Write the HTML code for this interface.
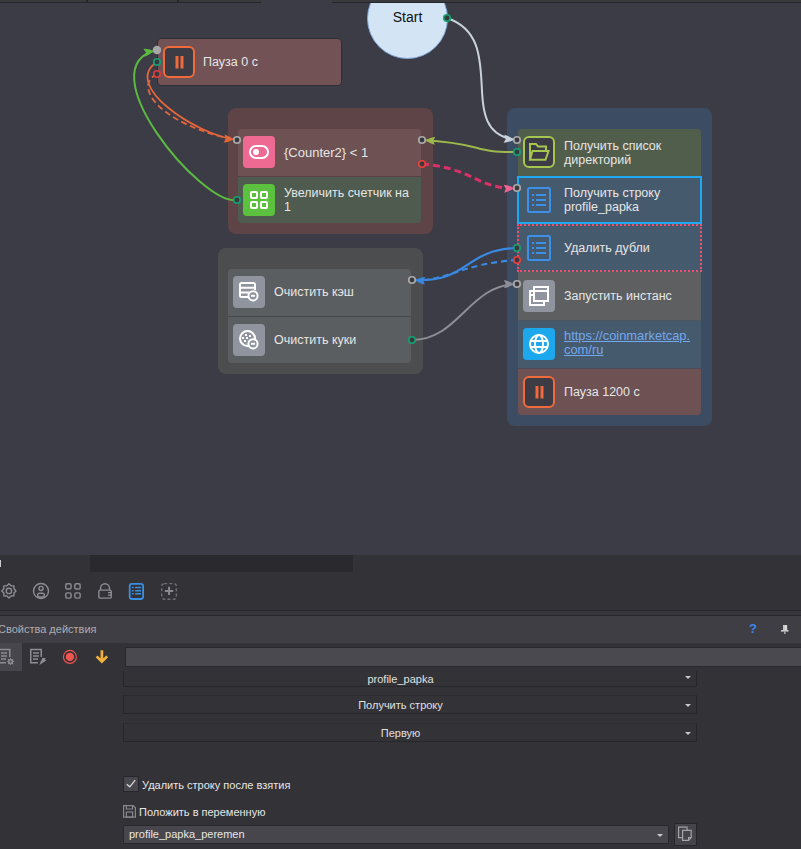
<!DOCTYPE html>
<html><head><meta charset="utf-8">
<style>
*{box-sizing:border-box;margin:0;padding:0}
html,body{width:801px;height:849px;overflow:hidden;background:#333237;font-family:"Liberation Sans",sans-serif}
.abs{position:absolute}
#canvas{position:absolute;left:0;top:0;width:801px;height:555px;background:#3c3c46;overflow:hidden}
.tab{position:absolute;top:0;height:3px;background:#3a393e;border-bottom:1px solid #27262b}
.tabsep{position:absolute;top:0;height:3px;width:2px;background:#252429}
.group{position:absolute;border-radius:8px}
.node{position:absolute;width:183px;color:#e6e6e6;font-size:12.5px;line-height:14px}
.node .txt{position:absolute;left:46px;top:0;height:100%;display:flex;align-items:center;white-space:pre}
.icon{position:absolute;left:5px;width:32px;height:32px;border-radius:4px}
.icon svg{position:absolute;left:0;top:0}
#wires{position:absolute;left:0;top:0}
.panel{position:absolute;left:0;top:555px;width:801px;height:294px;background:#333237}
.combo{position:absolute;left:123px;width:574px;height:19px;border:1px solid #27262b;border-top-color:#2c2b30;background:#333237;color:#e0e0e0;font-size:11px;text-align:center}
.combo span{position:absolute;left:0;right:19px;top:0;bottom:0;display:flex;align-items:center;justify-content:center}
.combo i{position:absolute;left:561px;top:8px;width:0;height:0;border-left:3px solid transparent;border-right:3px solid transparent;border-top:3px solid #c8c8c8}
</style></head><body>
<div id="canvas">

  <!-- Start circle -->
  <div class="abs" style="left:367px;top:-22px;width:81px;height:81px;border-radius:50%;background:#d3e5f5;border:1px solid #7fa8d8"></div>
  <div class="abs" style="left:367px;top:9px;width:81px;text-align:center;font-size:14px;line-height:16px;color:#111">Start</div>

  <!-- Pause 0 node -->
  <div class="node" style="left:157px;top:38px;width:185px;height:48px;background:#725255;border-radius:4px;border:1px solid #2e2d35">
    <div class="icon" style="left:5px;top:7px;background:#3d3b44;border:2px solid #f06a3c;border-radius:6px">
      <svg width="28" height="28"><rect x="10.5" y="8" width="3" height="12.5" fill="#f06a3c"/><rect x="15.5" y="8" width="3" height="12.5" fill="#f06a3c"/></svg>
    </div>
    <div class="txt" style="left:45px">Пауза 0 с</div>
  </div>

  <!-- red group -->
  <div class="group" style="left:228px;top:108px;width:205px;height:126px;background:#5e4347"></div>
  <div class="node" style="left:238px;top:129px;height:47px;background:#6d5153;border-radius:4px 4px 0 0">
    <div class="icon" style="top:7px;background:#ee6a92">
      <svg width="32" height="32"><rect x="7" y="10" width="18" height="12" rx="6" fill="none" stroke="#fff" stroke-width="2"/><circle cx="13" cy="16" r="3" fill="#fff"/></svg>
    </div>
    <div class="txt" style="font-size:13px">{Counter2} &lt; 1</div>
  </div>
  <div class="node" style="left:238px;top:177px;height:46px;background:#4e5b4e;border-radius:0 0 4px 4px">
    <div class="icon" style="top:7px;background:#5cc13e">
      <svg width="32" height="32" fill="none" stroke="#fff" stroke-width="2"><rect x="8" y="8" width="6" height="6" rx="1"/><rect x="18" y="8" width="6" height="6" rx="1"/><rect x="8" y="18" width="6" height="6" rx="1"/><rect x="18" y="18" width="6" height="6" rx="1"/></svg>
    </div>
    <div class="txt">Увеличить счетчик на
1</div>
  </div>

  <!-- gray group -->
  <div class="group" style="left:218px;top:248px;width:205px;height:126px;background:#4b4d4f"></div>
  <div class="node" style="left:228px;top:269px;height:47px;background:#5b5e61;border-radius:4px 4px 0 0">
    <div class="icon" style="top:7px;background:#8f949e"><svg width="32" height="32" fill="none" stroke="#fff" stroke-width="2"><path d="M15,21 H8.5 Q7,21 7,19.5 V8.5 Q7,7 8.5,7 H20.5 Q22,7 22,8.5 V14"/><path d="M7,11.8 H22 M7,16.5 H16"/><circle cx="20" cy="19.8" r="4.6" fill="#8f949e"/><path d="M18,19.8 H22"/></svg></div>
    <div class="txt" style="top:-1px">Очистить кэш</div>
  </div>
  <div class="node" style="left:228px;top:317px;height:46px;background:#5b5e61;border-radius:0 0 4px 4px">
    <div class="icon" style="top:7px;background:#8f949e"><svg width="32" height="32" fill="none" stroke="#fff" stroke-width="2"><circle cx="14.5" cy="14.5" r="7.5"/><circle cx="20" cy="19.8" r="4.6" fill="#8f949e"/><path d="M18,19.8 H22"/><g fill="#fff" stroke="none"><rect x="12" y="10" width="2" height="2"/><rect x="16" y="11" width="2" height="2"/><rect x="9" y="13" width="2" height="2"/><rect x="13" y="13" width="2" height="2"/><rect x="11" y="16" width="2" height="2"/></g></svg></div>
    <div class="txt">Очистить куки</div>
  </div>

  <!-- blue group -->
  <div class="group" style="left:507px;top:108px;width:205px;height:318px;background:#3c4c62"></div>
  <div class="node" style="left:518px;top:129px;height:47px;background:#525e4c;border-radius:4px 4px 0 0">
    <div class="icon" style="top:7px;background:#3c3b46;border:2px solid #a5c74f;border-radius:6px"><svg width="28" height="28" fill="none" stroke="#a5c74f" stroke-width="2" style="left:0;top:0"><path d="M5,21.75 V6 H11 L13,8.5 H21 V12.5" stroke-linejoin="miter"/><path d="M7.5,13 H23.5 L20.5,21.75 H5 Z" stroke-linejoin="miter"/></svg></div>
    <div class="txt">Получить список
директорий</div>
  </div>
  <div class="node" style="left:517px;top:176px;width:185px;height:48px;background:#465a6e;border:2px solid #1fa9f1">
    <div class="icon" style="left:4px;top:6px;background:transparent"><svg width="32" height="32" fill="none" stroke="#3d90ea" stroke-width="2"><rect x="5" y="4" width="22" height="24" rx="1.5"/><path d="M9,11 h2 M9,16 h2 M9,21 h2 M13,11 h10 M13,16 h10 M13,21 h10"/></svg></div><div class="txt" style="left:45px">Получить строку
profile_papka</div>
  </div>
  <div class="node" style="left:517px;top:224px;width:185px;height:48px;background:#465a6e;border:2px dotted #f0506a">
    <div class="icon" style="left:4px;top:6px;background:transparent"><svg width="32" height="32" fill="none" stroke="#3d90ea" stroke-width="2"><rect x="5" y="4" width="22" height="24" rx="1.5"/><path d="M9,11 h2 M9,16 h2 M9,21 h2 M13,11 h10 M13,16 h10 M13,21 h10"/></svg></div><div class="txt" style="left:45px">Удалить дубли</div>
  </div>
  <div class="node" style="left:518px;top:272px;height:48px;background:#5d5f61">
    <div class="icon" style="top:8px;background:#8f949e"><svg width="32" height="32" fill="none" stroke="#fff" stroke-width="2" stroke-linejoin="miter"><path d="M11,11 H7 V25 H21 V21"/><path d="M7,15 H10"/><rect x="11" y="7" width="14" height="14"/><path d="M11,11 H25"/></svg></div>
    <div class="txt">Запустить инстанс</div>
  </div>
  <div class="node" style="left:518px;top:320px;height:48px;background:#465a6e">
    <div class="icon" style="top:8px;background:#1da8ee"><svg width="32" height="32" fill="none" stroke="#fff" stroke-width="2"><circle cx="16" cy="16" r="9"/><ellipse cx="16" cy="16" rx="4" ry="9"/><path d="M8,13 H24 M8,19 H24"/></svg></div>
    <div class="txt" style="color:#74a9ee;text-decoration:underline;font-size:12.9px;top:-1px">https://coinmarketcap.
com/ru</div>
  </div>
  <div class="node" style="left:518px;top:368px;height:47px;background:#6d5153;border-radius:0 0 4px 4px">
    <div class="icon" style="top:8px;background:#3d3b44;border:2px solid #f06a3c;border-radius:6px"><svg width="28" height="28"><rect x="10.5" y="8" width="3" height="12.5" fill="#f06a3c"/><rect x="15.5" y="8" width="3" height="12.5" fill="#f06a3c"/></svg></div>
    <div class="txt">Пауза 1200 с</div>
  </div>


  <div class="abs" style="left:238px;top:176px;width:183px;height:1px;background:#5a3f45"></div>
  <div class="abs" style="left:228px;top:316px;width:183px;height:1px;background:#474a4d"></div>
  <div class="abs" style="left:518px;top:320px;width:183px;height:1px;background:#4a5663"></div>
  <div class="abs" style="left:518px;top:368px;width:183px;height:1px;background:#4d4a59"></div>
  <svg id="wires" width="801" height="555">
<path d="M447,18 C511.3,39.5 451.8,133.8 517,140" fill="none" stroke="#c9d2dc" stroke-width="2"/>
<path d="M517,152 C470.1,153 486.9,143.7 422,140" fill="none" stroke="#9cb84c" stroke-width="2"/>
<path d="M422,164 C474.3,168.1 478.6,190.2 517,188" fill="none" stroke="#dc3068" stroke-width="3" stroke-dasharray="7 4"/>
<path d="M517,248 C463,249.7 469.8,283.2 412,280" fill="none" stroke="#3a88e2" stroke-width="2.2"/>
<path d="M517,260 C460.1,263.7 447.2,281.9 412,280" fill="none" stroke="#3a88e2" stroke-width="2.2" stroke-dasharray="6 4"/>
<path d="M412,340 C459.3,339.7 468.8,284.5 517,284" fill="none" stroke="#8e8e96" stroke-width="2"/>
<path d="M157,62 C121,84.9 196.2,135.2 237,140" fill="none" stroke="#e4663c" stroke-width="1.8"/>
<path d="M157,74 C132,86 160.2,125.4 237,140" fill="none" stroke="#e4663c" stroke-width="1.8" stroke-dasharray="6 3.5"/>
<path d="M237,200 C202.3,206.6 85.2,65.8 157,50" fill="none" stroke="#5cba40" stroke-width="2"/>
<path d="M513.22,139.64 Q508.93,142.45 503.57,142.84 L505.85,138.94 L504.35,134.68 Q509.54,136.08 513.22,139.64 Z" fill="#c9d2dc"/>
<path d="M425.79,140.22 Q429.97,137.25 435.31,136.65 L433.18,140.64 L434.85,144.84 Q429.61,143.64 425.79,140.22 Z" fill="#9cb84c"/>
<path d="M513.21,188.22 Q509.40,191.64 504.16,192.84 L505.82,188.64 L503.69,184.66 Q509.03,185.25 513.21,188.22 Z" fill="#ee6494"/>
<path d="M415.79,280.21 Q419.96,277.24 425.31,276.63 L423.18,280.62 L424.85,284.82 Q419.61,283.63 415.79,280.21 Z" fill="#3a88e2"/>
<path d="M513.20,284.04 Q509.23,287.28 503.94,288.24 L505.80,284.12 L503.86,280.04 Q509.17,280.88 513.20,284.04 Z" fill="#8e8e96"/>
<path d="M233.23,139.56 Q228.88,142.27 223.51,142.54 L225.88,138.69 L224.47,134.40 Q229.63,135.91 233.23,139.56 Z" fill="#e4663c"/>
<path d="M153.29,50.82 Q150.07,54.80 145.09,56.82 L146.06,52.41 L143.32,48.81 Q148.69,48.55 153.29,50.82 Z" fill="#5cba40"/>
<circle cx="447" cy="18" r="3.25" fill="#3a3940" stroke="#14a36b" stroke-width="1.7"/>
<circle cx="157" cy="50" r="4.2" fill="#a8a8a8"/>
<circle cx="157" cy="62" r="3.25" fill="#3a3940" stroke="#14a070" stroke-width="1.7"/>
<circle cx="157" cy="74" r="3.25" fill="#3a3940" stroke="#e03c3c" stroke-width="1.7"/>
<circle cx="237" cy="140" r="3.25" fill="#3a3940" stroke="#aaa9a8" stroke-width="1.7"/>
<circle cx="422" cy="140" r="3.25" fill="#3a3940" stroke="#aaa9a8" stroke-width="1.7"/>
<circle cx="422" cy="164" r="3.25" fill="#3a3940" stroke="#e8403c" stroke-width="1.7"/>
<circle cx="237" cy="200" r="3.25" fill="#3a3940" stroke="#14a070" stroke-width="1.7"/>
<circle cx="412" cy="280" r="3.25" fill="#3a3940" stroke="#aaa9a8" stroke-width="1.7"/>
<circle cx="412" cy="340" r="3.25" fill="#3a3940" stroke="#14a070" stroke-width="1.7"/>
<circle cx="517" cy="140" r="3.25" fill="#3a3940" stroke="#aaa9a8" stroke-width="1.7"/>
<circle cx="517" cy="152" r="3.25" fill="#3a3940" stroke="#14a070" stroke-width="1.7"/>
<circle cx="517" cy="188" r="3.25" fill="#3a3940" stroke="#aaa9a8" stroke-width="1.7"/>
<circle cx="517" cy="248" r="3.25" fill="#3a3940" stroke="#14a070" stroke-width="1.7"/>
<circle cx="517" cy="260" r="3.25" fill="#3a3940" stroke="#e8403c" stroke-width="1.7"/>
<circle cx="517" cy="284" r="3.25" fill="#3a3940" stroke="#aaa9a8" stroke-width="1.7"/>
</svg>
  <div class="tab" style="left:0;width:87px"></div>
  <div class="tab" style="left:88px;width:90px"></div>
  <div class="tab" style="left:179px;width:82px"></div>
  <div class="tab" style="left:332px;width:469px"></div>
  <div class="tabsep" style="left:86px"></div>
  <div class="tabsep" style="left:177px"></div>
</div>

<div class="panel">
  <div class="abs" style="left:90px;top:0;width:263px;height:17px;background:#2a292e"></div>
  <div class="abs" style="left:0;top:5px;width:1px;height:7px;background:#cccccc"></div>
  <!-- toolbar icons -->
  <svg class="abs" style="left:0;top:20px" width="190" height="36" fill="none" stroke="#8d8c93" stroke-width="1.4">
    <path d="M8.90,8.80 L11.00,10.82 L13.92,10.88 L13.98,13.80 L16.00,15.90 L13.98,18.00 L13.92,20.92 L11.00,20.98 L8.90,23.00 L6.80,20.98 L3.88,20.92 L3.82,18.00 L1.80,15.90 L3.82,13.80 L3.88,10.88 L6.80,10.82 Z" stroke-linejoin="round"/>
    <circle cx="8.9" cy="15.9" r="2.7"/>
    <circle cx="41" cy="16" r="7.5"/>
    <circle cx="41" cy="13.4" r="2.05"/>
    <rect x="37.7" y="18.3" width="6.6" height="3.7" rx="1.8"/>
    <rect x="65.75" y="8.75" width="5.3" height="5.3" rx="1.4"/><rect x="74.85" y="8.75" width="5.3" height="5.3" rx="1.4"/>
    <rect x="65.75" y="17.85" width="5.3" height="5.3" rx="1.4"/><rect x="74.85" y="17.85" width="5.3" height="5.3" rx="1.4"/>
    <path d="M100.55,15 V13.2 A4.45,4.45 0 0 1 109.45,13.2 V15"/>
    <rect x="98.85" y="15.15" width="12.4" height="8" rx="1.5"/>
    <path d="M108,17.6 H111.5 M108,20.2 H111.5" stroke-width="1.2"/>
    <rect x="129.7" y="8.8" width="13.4" height="15.2" rx="2.2" stroke="#3b8fe0" stroke-width="1.8"/>
    <path d="M132,12.6 h1.7 M132,15.7 h1.7 M132,18.8 h1.7 M135.1,12.6 h5.9 M135.1,15.7 h5.9 M135.1,18.8 h5.9" stroke="#3b8fe0" stroke-width="1.5"/>
    <rect x="161.75" y="8.65" width="14.6" height="15.6" rx="2.5" stroke-dasharray="3 2.2" stroke="#6f6e74" stroke-width="1.4"/>
    <path d="M169.06,11.7 v8.4 M164.9,15.9 h8.35" stroke="#8a898f" stroke-width="2"/>
  </svg>
  <div class="abs" style="left:0;top:55px;width:801px;height:1px;background:#27262b"></div>
  <div class="abs" style="left:0;top:56px;width:801px;height:4px;background:#37363c"></div>
  <div class="abs" style="left:0;top:60px;width:801px;height:1px;background:#27262b"></div>
  <div class="abs" style="left:0;top:61px;width:801px;height:27px;background:#3f3e44"></div>
  <div class="abs" style="left:-2px;top:68px;font-size:11px;line-height:13px;color:#aeadb3;white-space:pre">Свойства действия</div>
  <div class="abs" style="left:749px;top:66px;font-size:13px;line-height:16px;color:#3d86e8;font-weight:bold">?</div>
  <svg class="abs" style="left:778px;top:69px" width="14" height="12" fill="#c8c8c8"><rect x="5" y="1" width="4.2" height="5.5"/><rect x="7.2" y="1.5" width="1.2" height="4.5" fill="#e0e0e0"/><rect x="3" y="6" width="7.5" height="1.6"/><rect x="6.3" y="7.5" width="1.2" height="2.5"/></svg>
  <!-- action row -->
  <div class="abs" style="left:0;top:88px;width:22px;height:28px;background:#47464c"></div>
  <svg class="abs" style="left:0;top:88px" width="120" height="28" fill="none" stroke="#8d8c93" stroke-width="1.5">
    <path d="M-2,6.5 H9.75 V14"/><path d="M-2,19.75 H6"/><path d="M1,10 h6 M1,13 h6 M1,16 h5" stroke-width="1.6"/>
    <path d="M10.60,15.00 L11.59,16.20 L13.15,16.05 L13.00,17.61 L14.20,18.60 L13.00,19.59 L13.15,21.15 L11.59,21.00 L10.60,22.20 L9.61,21.00 L8.05,21.15 L8.20,19.59 L7.00,18.60 L8.20,17.61 L8.05,16.05 L9.61,16.20 Z" fill="#8d8c93" stroke="none"/><circle cx="10.6" cy="18.6" r="1.1" fill="#47464c" stroke="none"/>
    <path d="M41.25,14 V6.5 H30.75 V19.75 H38"/><path d="M33,10 h6 M33,13 h6 M33,16 h5" stroke-width="1.6"/>
    <path d="M42.2,15 H45.8 L44.8,16.7 L46.6,17.3 L39.4,21.9 L40.8,18.2 L41.4,17.5 Z" fill="#8d8c93" stroke="none"/>
    <circle cx="69.9" cy="13.9" r="6.5" stroke="#ee5550" stroke-width="1.1"/>
    <circle cx="69.9" cy="13.9" r="4.2" fill="#f05550" stroke="none"/>
    <path d="M101.9,7.2 V18.5 M96.6,13.4 L101.9,18.7 L107.2,13.4" stroke="#f2b23a" stroke-width="2.7"/>
  </svg>
  <div class="abs" style="left:125px;top:92px;width:690px;height:20px;background:#4a494f;border:1px solid #29282d"></div>
  
  <div class="combo" style="top:116px;height:16px;border-top:none"><span>profile_papka</span><i style="top:5px"></i></div>
  <div class="combo" style="top:140px"><span>Получить строку</span><i></i></div>
  <div class="combo" style="top:168px"><span>Первую</span><i></i></div>
  <div class="abs" style="left:123px;top:221px;width:16px;height:16px;background:#48474d;border:1px solid #27262b"></div>
  <svg class="abs" style="left:123px;top:221px" width="16" height="16" fill="none" stroke="#d8d8d8" stroke-width="1.3"><path d="M3.8,8.2 L6.8,10.8 L12.2,4.2"/></svg>
  <div class="abs" style="left:142px;top:224px;font-size:11px;color:#e6e6e6;white-space:pre">Удалить строку после взятия</div>
  <svg class="abs" style="left:123px;top:250px" width="14" height="14" fill="none" stroke="#88878d" stroke-width="1.2"><path d="M0.6,0.6 H10.2 L12.4,2.8 V12.1 H0.6 Z"/><path d="M3.4,0.6 V4 H9.6 V0.6"/><rect x="3.4" y="7" width="6.2" height="5.1"/></svg>
  <div class="abs" style="left:139px;top:251px;font-size:11px;color:#e6e6e6;white-space:pre">Положить в переменную</div>
  <div class="abs" style="left:123px;top:270px;width:546px;height:19px;background:#47464c;border:1px solid #29282d;color:#e6e6e6;font-size:11px;padding-left:5px;line-height:17px">profile_papka_peremen<i style="position:absolute;left:533px;top:8px;width:0;height:0;border-left:3px solid transparent;border-right:3px solid transparent;border-top:3px solid #c8c8c8"></i></div>
  <div class="abs" style="left:674px;top:268px;width:23px;height:23px;background:#45444a;border:1px solid #27262b"></div>
  <svg class="abs" style="left:674px;top:268px" width="23" height="23" fill="none" stroke="#a3a3aa" stroke-width="1.2"><rect x="4.6" y="4.1" width="8.4" height="10.6"/><path d="M8.6,7.4 H17.2 V14.6 L14.6,17.4 H8.6 Z" fill="#45444a"/><path d="M14.6,17.4 V14.6 H17.2"/></svg>
</div>
</body></html>
